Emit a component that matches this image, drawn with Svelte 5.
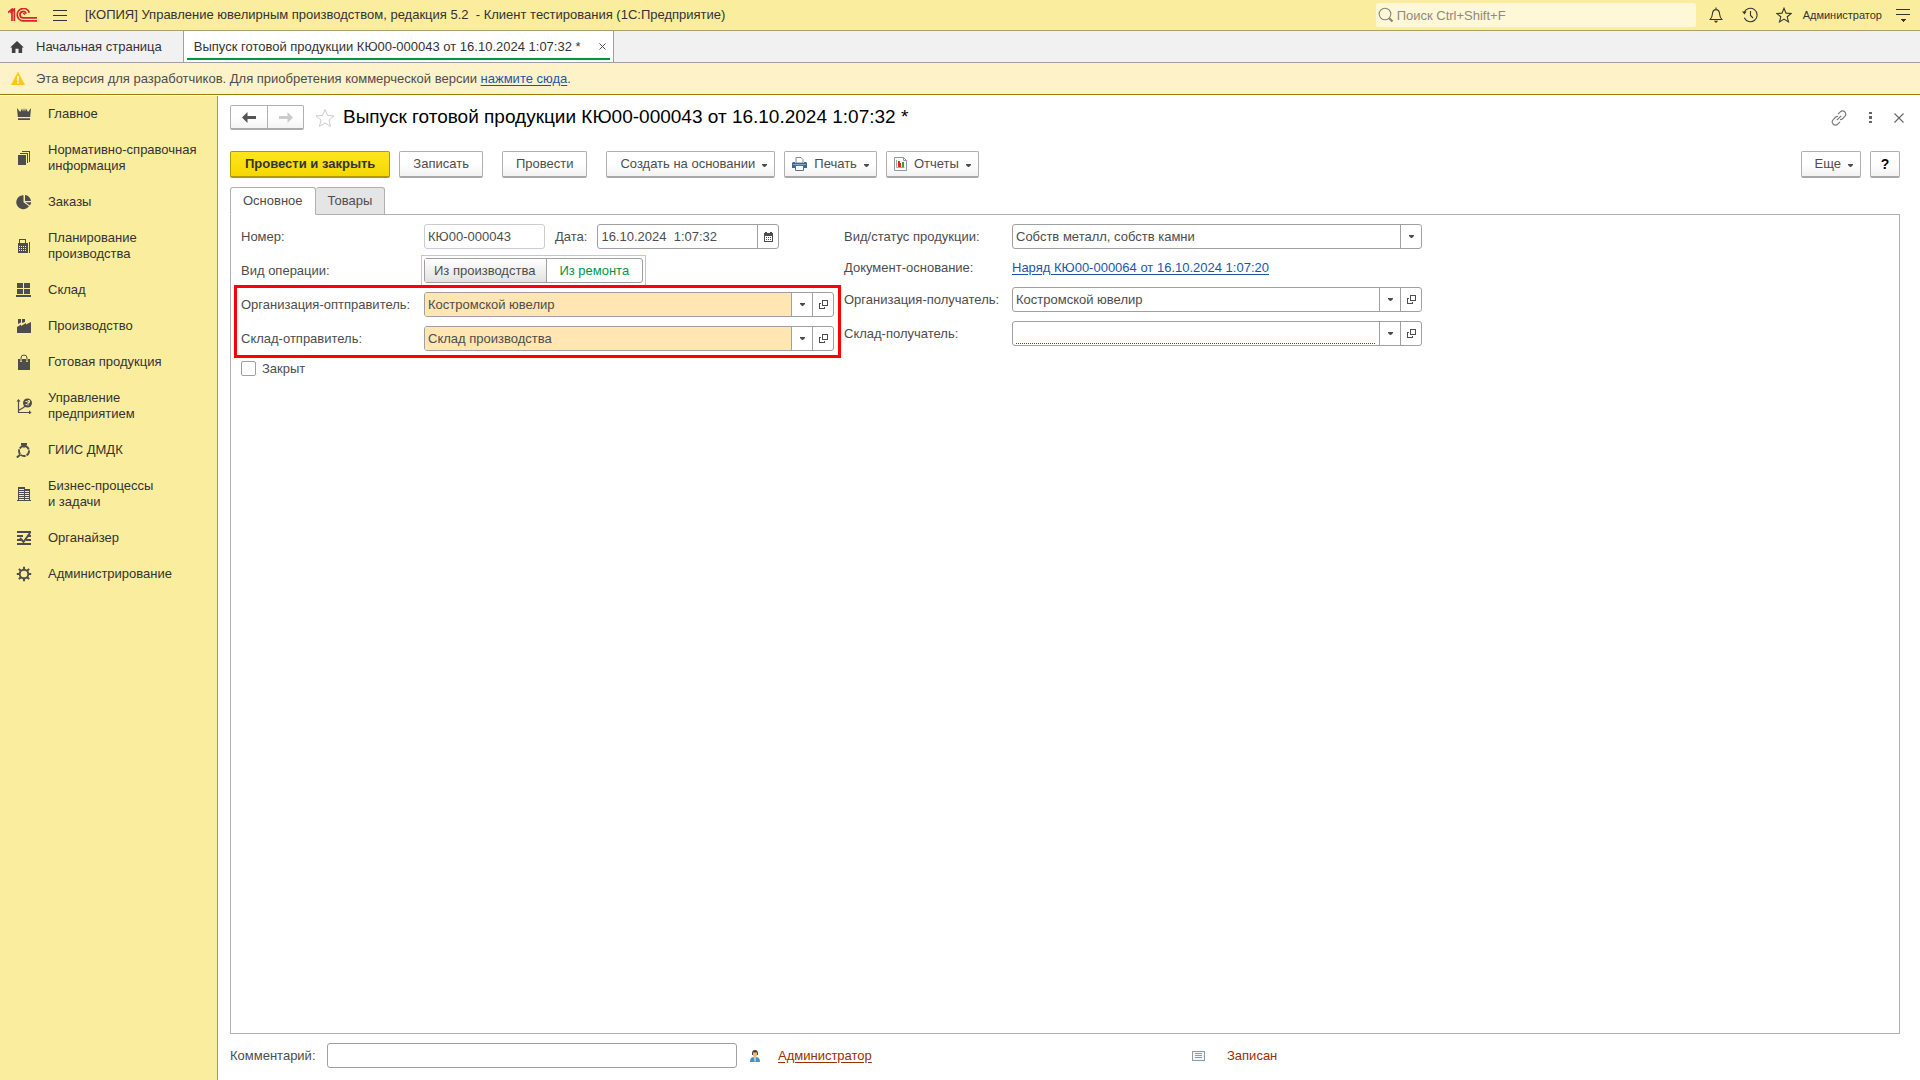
<script lang="ts">
  // Document form: finished goods release, with the application shell around it.
  const sections: { icon: string; lines: string[] }[] = [
    { icon: 'crown', lines: ['Главное'] },
    { icon: 'papers', lines: ['Нормативно-справочная', 'информация'] },
    { icon: 'pie', lines: ['Заказы'] },
    { icon: 'calc', lines: ['Планирование', 'производства'] },
    { icon: 'store', lines: ['Склад'] },
    { icon: 'factory', lines: ['Производство'] },
    { icon: 'bag', lines: ['Готовая продукция'] },
    { icon: 'chart', lines: ['Управление', 'предприятием'] },
    { icon: 'ring', lines: ['ГИИС ДМДК'] },
    { icon: 'building', lines: ['Бизнес-процессы', 'и задачи'] },
    { icon: 'organizer', lines: ['Органайзер'] },
    { icon: 'gear', lines: ['Администрирование'] },
  ];

  const title = 'Выпуск готовой продукции КЮ00-000043 от 16.10.2024 1:07:32 *';

  let operation = $state('production');
  let closed = $state(false);
  let tab = $state('main');
</script>

{#snippet caret()}
  <svg class="caret" viewBox="0 0 5 3" width="5" height="3" aria-hidden="true"><path d="M0 0h5v1L3 3H2L0 1z" /></svg>
{/snippet}

{#snippet pickers(name: string)}
  <button class="pick" aria-label="Выбрать: {name}">{@render caret()}</button>
  <button class="pick" aria-label="Открыть: {name}">
    <svg viewBox="0 0 9 9" width="9" height="9" fill="none" stroke="#4d4d4d" shape-rendering="crispEdges">
      <path d="M3.5 .5h5v5h-5zM2 3.5H.5v5h5V7" />
    </svg>
  </button>
{/snippet}

<div class="app">
  <header class="topbar">
    <svg class="logo" viewBox="0 0 29 14" width="29" height="14" fill="none" stroke="#d8232a" aria-label="1С">
      <path d="M0 4.5L4 1.2V13M2.5 5L6.3 1V13" stroke-width="1.7" />
      <path d="M21.3 4.6A6.2 6.2 0 1 0 15.2 12.9H29" stroke-width="1.8" />
      <path d="M18.2 5.6A3.2 3.2 0 1 0 15.2 9.9H29" stroke-width="1.7" />
      <path d="M15 5.6a1.2 1.2 0 0 1 1.6 1.3" stroke-width="1.3" />
    </svg>
    <button class="icon burger" aria-label="Меню">
      <svg viewBox="0 0 14 11" width="14" height="11" stroke="#333" shape-rendering="crispEdges">
        <path d="M0 .5h14M0 5.5h14M0 10.5h14" />
      </svg>
    </button>
    <span class="app-title">[КОПИЯ] Управление ювелирным производством, редакция 5.2&nbsp; - Клиент тестирования (1С:Предприятие)</span>
    <label class="search">
      <svg viewBox="0 0 16 16" width="16" height="16" fill="none" stroke="#8a8670">
        <circle cx="7" cy="7" r="5.8" stroke-width="1.1" />
        <path d="M11.2 11.2l3.3 3.3" stroke-width="2.2" />
      </svg>
      <input type="search" aria-label="Поиск" placeholder="Поиск Ctrl+Shift+F" />
    </label>
    <nav class="tools">
      <button class="icon" aria-label="Оповещения">
        <svg viewBox="0 0 16 16" width="16" height="16" fill="none" stroke="#333" stroke-width="1.1">
          <path d="M8 .5v2M1.5 12.5h13M2.2 12.3c1.8-1.5 2-3 2.2-5.3C4.6 4.2 6 2.6 8 2.6s3.4 1.6 3.6 4.4c.2 2.3.4 3.8 2.2 5.3" />
          <path d="M5.8 13.8h4.400L8 16z" fill="#333" stroke="none" />
        </svg>
      </button>
      <button class="icon" aria-label="История">
        <svg viewBox="0 0 16 16" width="16" height="16" fill="none" stroke="#333" stroke-width="1.1">
          <path d="M2.2 5.5A6.7 6.7 0 1 1 2.3 10.8M8.5 4v4.5l2.5 2.5" />
          <path d="M0 4.5h4.500L2.5 7.5z" fill="#333" stroke="none" />
        </svg>
      </button>
      <button class="icon" aria-label="Избранное">
        <svg viewBox="0 0 16 16" width="16" height="16" fill="none" stroke="#333" stroke-width="1.1">
          <path d="M8 1.2l2 4.9 5.2.3-4 3.4 1.300 5.100L8 12.100l-4.500 2.800 1.300-5.100-4-3.400 5.200-.3z" />
        </svg>
      </button>
      <button class="user">Администратор</button>
      <button class="icon" aria-label="Сервис и настройки">
        <svg viewBox="0 0 14 14" width="14" height="14" shape-rendering="crispEdges">
          <path d="M0 1h14v1H0zM0 6h14v1H0z" fill="#333" />
          <path d="M4 11h6l-3 3z" fill="#333" />
        </svg>
      </button>
    </nav>
  </header>

  <nav class="windows">
    <button class="window home">
      <svg viewBox="0 0 16 14" width="14" height="12" fill="#404040" aria-hidden="true">
        <path d="M8 0l8 7.5h-2V14H9.800V9H6.200v5H2V7.500H0L8 0z" />
      </svg>
      <span>Начальная страница</span>
    </button>
    <div class="window current">
      <button class="plain">{title}</button>
      <button class="plain close" aria-label="Закрыть окно">
        <svg viewBox="0 0 7 7" width="7" height="7" stroke="#4d4d4d"><path d="M.5 .5l6 6M6.5 .5l-6 6" /></svg>
      </button>
    </div>
  </nav>

  <div class="notice">
    <svg viewBox="0 0 14 13" width="14" height="13" aria-hidden="true">
      <path d="M7 .3L13.700 13H.3z" fill="#fbc814" stroke="#fbc814" stroke-linejoin="round" stroke-width=".6" />
      <path d="M6.200 4h1.600v4.800H6.200zM6.200 9.800h1.600v1.600H6.200z" fill="#fff" />
    </svg>
    <span>Эта версия для разработчиков. Для приобретения коммерческой версии <a href="#buy">нажмите сюда</a>.</span>
  </div>

  <div class="body">
    <nav class="sections">
      {#each sections as s}
        <a class="section" href="#{s.icon}">
          <svg viewBox="0 0 16 16" width="16" height="16" fill="#4d4d4d" aria-hidden="true">
            {#if s.icon === 'crown'}
              <path d="M1 2l3.200 4L6 2.500l1 3L8 2l1 3.500 1-3L12 6l3-4-.8 9H1.800zM2 12.300h12V14H2z" />
            {:else if s.icon === 'papers'}
              <path d="M2 5h8v10H2zM4 3h8v10h-1V4H4zM6 1h8v11h-1V2H6z" shape-rendering="crispEdges" />
            {:else if s.icon === 'pie'}
              <path d="M7.500 1.200v7.100L13 12.200A7 7 0 1 1 7.500 1.200z" />
              <path d="M9 1a6.500 6.500 0 0 1 6 6H9zM9.300 8.300h5.900a7 7 0 0 1-1.300 3.200z" />
            {:else if s.icon === 'calc'}
              <path
                fill-rule="evenodd"
                shape-rendering="crispEdges"
                d="M3 1h7v4h2v10H2V5h1zM4 2v3h5V2zM3 8v1h1V8zm2 0v1h1V8zm2 0v1h1V8zm2 0v1h1V8zM3 10v1h1v-1zm2 0v1h1v-1zm2 0v1h1v-1zm2 0v1h1v-1zM3 12v1h1v-1zm2 0v1h1v-1zm2 0v1h1v-1zm2 0v1h1v-1zM13 4h1v11h-1z"
              />
            {:else if s.icon === 'store'}
              <path d="M1 1h6v5H1zM8 1h6v5H8zM1 7h6v5H1zM8 7h6v5H8zM0 13h15v2H0z" shape-rendering="crispEdges" />
            {:else if s.icon === 'factory'}
              <path d="M1 15V9l4-2.500v1.500l5-3v1.500L15 4v11zM2 1h3v3.500L2 6zM6 1h3v3L6 5z" />
            {:else if s.icon === 'bag'}
              <path d="M2 5h12v11H2z" />
              <path d="M5 8V4.500a3 3 0 0 1 6 0V8" fill="none" stroke="#fbed9e" stroke-width="2" />
              <path d="M5 7.500V4a3 3 0 0 1 6 0v3.500" fill="none" stroke="#4d4d4d" />
            {:else if s.icon === 'chart'}
              <path d="M2.500 2v12.500H14M2.500 12.500l5-3 3-2.500" fill="none" stroke="#4d4d4d" stroke-width="1.200" />
              <path d="M.5 3.500l2-2.500 2 2.500zM13 12.200l2.500 2.300-2.500 2.200z" />
              <circle cx="11.500" cy="5" r="4.500" />
              <path d="M9.500 3.500h1.500M9.500 6.500h1.500M12 2.500v5M12 2.500h1.500v2.200H12" fill="none" stroke="#fbed9e" />
            {:else if s.icon === 'ring'}
              <circle cx="8" cy="9" r="5" fill="none" stroke="#4d4d4d" stroke-width="1.900" stroke-dasharray="5 1" />
              <path d="M5 1h6v2L8 6 5 3z" />
              <path d="M4.500 12.500L.8 15.500" stroke="#4d4d4d" stroke-width="2" />
            {:else if s.icon === 'building'}
              <path
                fill-rule="evenodd"
                shape-rendering="crispEdges"
                d="M2 1h7v2h5v11h1v1H1v-1h1zM3 3v1h5V3zm0 2v1h5V5zm0 2v1h5V7zm0 2v1h5V9zm0 2v1h5v-1zm0 2v1h5v-1zm6-8v1h4V5zm0 2v1h4V7zm0 2v1h4V9zm0 2v1h4v-1zm0 2v1h4v-1z"
              />
            {:else if s.icon === 'organizer'}
              <path d="M1 2h14M1 6h6M11 6h4M1 10h4M10 10h5M1 14h14" stroke="#4d4d4d" stroke-width="2" />
              <path d="M4 8l3.500 4L14 3" fill="none" stroke="#4d4d4d" stroke-width="2" />
            {:else}
              <circle cx="8" cy="8" r="4.300" fill="none" stroke="#4d4d4d" stroke-width="1.900" />
              <path
                d="M8 .8v3M8 12.200v3M.8 8h3M12.200 8h3M2.900 2.900L5 5M11 11l2.100 2.100M13.100 2.900L11 5M5 11l-2.100 2.100"
                stroke="#4d4d4d"
                stroke-width="2"
              />
            {/if}
          </svg>
          <span>
            {#each s.lines as line}<span class="line">{line}</span>{/each}
          </span>
        </a>
      {/each}
    </nav>

    <main class="document">
      <div class="heading">
        <div class="history">
          <button aria-label="Назад">
            <svg viewBox="0 0 14 11" width="14" height="11"><path d="M0 5.500L5.500 0v4H14v3H5.500v4z" fill="#555" /></svg>
          </button>
          <button aria-label="Вперед" disabled>
            <svg viewBox="0 0 14 11" width="14" height="11"><path d="M14 5.500L8.500 0v4H0v3h8.500v4z" fill="#ccc" /></svg>
          </button>
        </div>
        <button class="plain fav" aria-label="В избранное">
          <svg viewBox="0 0 20 20" width="20" height="20" fill="none" stroke="#ccc">
            <path d="M10 1.500l2.500 6 6.500.4-5 4.200 1.600 6.400L10 15l-5.600 3.500L6 12.100 1 7.900l6.500-.4z" />
          </svg>
        </button>
        <h1>{title}</h1>
        <div class="form-tools">
          <button class="plain" aria-label="Ссылка">
            <svg viewBox="0 0 16 16" width="16" height="16" fill="none" stroke="#777" stroke-width="1.200">
              <path d="M7 4.200l2.300-2.300a3 3 0 0 1 4.500 0 3 3 0 0 1 0 4.500L11.500 8.700a3 3 0 0 1-2.500.8M9 11.800l-2.300 2.300a3 3 0 0 1-4.500 0 3 3 0 0 1 0-4.500l2.300-2.300A3 3 0 0 1 7 6.500M5.800 10.200l4.400-4.400" />
            </svg>
          </button>
          <button class="plain" aria-label="Еще">
            <svg viewBox="0 0 3 11" width="3" height="11" fill="#666" shape-rendering="crispEdges">
              <path d="M0 0h3v2H0zM0 4h3v3H0zM0 9h3v2H0z" />
            </svg>
          </button>
          <button class="plain" aria-label="Закрыть">
            <svg viewBox="0 0 10 10" width="10" height="10" stroke="#666" stroke-width="1.100"><path d="M.5 .5l9 9M9.500 .5l-9 9" /></svg>
          </button>
        </div>
      </div>

      <div class="commands">
        <button class="cmd primary">Провести и закрыть</button>
        <button class="cmd">Записать</button>
        <button class="cmd apart">Провести</button>
        <button class="cmd apart menu">Создать на основании {@render caret()}</button>
        <button class="cmd with-icon">
          <svg viewBox="0 0 15 14" width="15" height="14" aria-hidden="true">
            <path d="M4 .5h5L11 2.500V6H4z" fill="#fff" stroke="#7d8b99" />
            <path d="M1 5h2v1h9V5h2l1 1v5H0V6z" fill="#3d6690" />
            <path d="M1 7h13v1H1z" fill="#7fa3c6" />
            <path d="M3.500 8.500h8v5h-8z" fill="#fff" stroke="#5d7389" />
          </svg>
          Печать {@render caret()}
        </button>
        <button class="cmd with-icon">
          <svg viewBox="0 0 13 14" width="13" height="14" aria-hidden="true">
            <path d="M.5 .5h9l3 3v10H.5z" fill="#fff" stroke="#8b99a8" />
            <path d="M9.500 .5v3h3" fill="none" stroke="#8b99a8" />
            <path d="M2.500 3v7.500h8" fill="none" stroke="#9aa" />
            <path d="M4 4h2v6H4z" fill="#e8281e" /><path d="M6 6h1v4H6z" fill="#e8281e" /><path d="M8 5h2v5H8z" fill="#31a037" />
          </svg>
          Отчеты {@render caret()}
        </button>
        <button class="cmd menu more">Еще {@render caret()}</button>
        <button class="cmd help" aria-label="Справка">?</button>
      </div>

      <div class="tabs" role="tablist">
        <button role="tab" aria-selected={tab === 'main'} onclick={() => (tab = 'main')}>Основное</button>
        <button role="tab" aria-selected={tab === 'goods'} onclick={() => (tab = 'goods')}>Товары</button>
      </div>

      <section class="panel">
        <div class="column left">
          <div class="row">
            <label class="caption" for="number">Номер:</label>
            <div class="field number"><input id="number" value="КЮ00-000043" /></div>
            <label class="date-caption" for="date">Дата:</label>
            <div class="field date">
              <input id="date" value="16.10.2024  1:07:32" />
              <button class="pick" aria-label="Календарь">
                <svg viewBox="0 0 9 10" width="9" height="10" fill="#4d4d4d" shape-rendering="crispEdges">
                  <path fill-rule="evenodd" d="M0 1h1V0h2v1h3V0h2v1h1v9H0zM1 4v5h7V4z" />
                  <path d="M2 5h1v1H2zM4 5h1v1H4zM6 5h1v1H6zM2 7h1v1H2zM4 7h1v1H4zM6 7h1v1H6z" />
                </svg>
              </button>
            </div>
          </div>
          <div class="row" role="radiogroup" aria-label="Вид операции">
            <span class="caption">Вид операции:</span>
            <div class="switch">
              <label class:chosen={operation === 'production'}>
                <input type="radio" name="operation" value="production" bind:group={operation} />Из производства
              </label>
              <label class:chosen={operation === 'repair'}>
                <input type="radio" name="operation" value="repair" bind:group={operation} />Из ремонта
              </label>
            </div>
          </div>
          <div class="sender">
            <div class="row">
              <label class="caption" for="org-from">Организация-оптправитель:</label>
              <div class="field filled">
                <input id="org-from" value="Костромской ювелир" />
                {@render pickers('организация-отправитель')}
              </div>
            </div>
            <div class="row">
              <label class="caption" for="store-from">Склад-отправитель:</label>
              <div class="field filled">
                <input id="store-from" value="Склад производства" />
                {@render pickers('склад-отправитель')}
              </div>
            </div>
          </div>
          <label class="check"><input type="checkbox" bind:checked={closed} />Закрыт</label>
        </div>

        <div class="column right">
          <div class="row">
            <label class="caption" for="status">Вид/статус продукции:</label>
            <div class="field">
              <select id="status"><option>Собств металл, собств камни</option></select>
              <span class="pick">{@render caret()}</span>
            </div>
          </div>
          <div class="row basis">
            <span class="caption">Документ-основание:</span>
            <a href="#order">Наряд КЮ00-000064 от 16.10.2024 1:07:20</a>
          </div>
          <div class="row">
            <label class="caption" for="org-to">Организация-получатель:</label>
            <div class="field">
              <input id="org-to" value="Костромской ювелир" />
              {@render pickers('организация-получатель')}
            </div>
          </div>
          <div class="row">
            <label class="caption" for="store-to">Склад-получатель:</label>
            <div class="field">
              <div class="required"><input id="store-to" /></div>
              {@render pickers('склад-получатель')}
            </div>
          </div>
        </div>
      </section>

      <footer class="footer">
        <div class="comment">
          <label for="comment">Комментарий:</label>
          <div class="field"><input id="comment" /></div>
          <svg viewBox="0 0 10 12" width="10" height="12" aria-hidden="true">
            <path d="M2 3.500C2 1 3.200 0 5 0s3 1 3 3.500V5H2z" fill="#4a4038" />
            <path d="M3 2.500h4v3L5.500 8h-1L3 5.500z" fill="#f3b96b" />
            <path d="M0 12c0-3 1-4.500 3.500-5L5 9l1.500-2C9 7.500 10 9 10 12z" fill="#3d94c9" />
            <path d="M4.500 8.500h1v3h-1z" fill="#fff" />
          </svg>
          <a class="author" href="#author">Администратор</a>
        </div>
        <div class="state">
          <svg viewBox="0 0 13 10" width="13" height="10" shape-rendering="crispEdges" aria-hidden="true">
            <path d="M.5 .5h12v9H.5z" fill="#f4f7fa" stroke="#8b9bb0" />
            <path d="M3 2h7v1H3zM3 4h7v1H3zM3 6h7v1H3z" fill="#8b9bb0" />
          </svg>
          <span>Записан</span>
        </div>
      </footer>
    </main>
  </div>
</div>

<style>
  :global(body) {
    background: #fff;
  }
  .app {
    display: flex;
    flex-direction: column;
    min-height: 100vh;
    color: #4d4d4d;
    font: 13px/16px 'Liberation Sans', Arial, sans-serif;
  }
  .app *,
  .app {
    box-sizing: border-box;
  }
  button,
  input,
  select {
    margin: 0;
    padding: 0;
    border: 0;
    outline: 0;
    background: none;
    color: inherit;
    font: inherit;
  }
  svg {
    display: block;
    flex-shrink: 0;
  }
  a {
    color: #1c55ae;
    text-underline-offset: 2px;
  }
  .caret {
    fill: #4d4d4d;
  }

  .topbar {
    display: flex;
    align-items: center;
    height: 31px;
    padding: 0 10px 0 8px;
    border-bottom: 1px solid #aaa06a;
    background: #fbed9e;
    color: #333;
  }
  .icon {
    display: flex;
  }
  .burger {
    margin: 0 18px 0 16px;
  }
  .app-title {
    flex: 1;
    white-space: nowrap;
  }
  .search {
    display: flex;
    align-items: center;
    gap: 3px;
    width: 320px;
    height: 24px;
    margin-right: 12px;
    padding-left: 2px;
    border-radius: 2px;
    background: #fef7d8;
  }
  .search input {
    flex: 1;
    height: 24px;
  }
  .search input::placeholder {
    color: #8f8b78;
    opacity: 1;
  }
  .tools {
    display: flex;
    align-items: center;
    gap: 18px;
  }
  .user {
    margin: 0 -4px 0 -7px;
    font-size: 11px;
  }

  .windows {
    display: flex;
    height: 32px;
    border-bottom: 1px solid #a0a0a0;
    background: #f1f1f1;
    color: #333;
  }
  .window {
    display: flex;
    align-items: center;
    border-right: 1px solid #a0a0a0;
  }
  .home {
    gap: 12px;
    padding: 0 21px 0 10px;
  }
  .current {
    position: relative;
    gap: 18px;
    padding: 0 7px 0 10px;
    background: #fff;
  }
  .current::after {
    content: '';
    position: absolute;
    right: 3px;
    bottom: 2px;
    left: 3px;
    height: 2px;
    background: #009646;
  }
  .plain {
    display: flex;
    white-space: nowrap;
  }

  .notice {
    display: flex;
    align-items: center;
    gap: 11px;
    height: 32px;
    padding-left: 11px;
    border-bottom: 1px solid #a08000;
    background: #fef2c8;
  }

  .body {
    display: flex;
    flex: 1;
    padding-top: 1px;
  }
  .sections {
    flex: 0 0 218px;
    border-right: 1px solid #a09868;
    background: #fbed9e;
  }
  .section {
    display: flex;
    align-items: center;
    gap: 16px;
    padding: 10px 16px;
    color: #333;
    text-decoration: none;
    white-space: nowrap;
  }
  .line {
    display: block;
  }

  .document {
    display: flex;
    flex: 1;
    flex-direction: column;
    min-width: 0;
    padding: 9px 20px 12px 12px;
  }
  .heading {
    display: flex;
    align-items: center;
    height: 25px;
  }
  .history {
    display: flex;
    height: 25px;
    border: 1px solid #b0b0b0;
    border-bottom: 2px solid #aaa;
    border-radius: 2px;
    background: linear-gradient(#fff 50%, #f4f4f4);
  }
  .history button {
    display: flex;
    align-items: center;
    justify-content: center;
    width: 36px;
  }
  .history button + button {
    border-left: 1px solid #b0b0b0;
  }
  .fav {
    margin: 0 8px 0 11px;
  }
  h1 {
    flex: 1;
    margin: 0 0 2px;
    color: #000;
    font-size: 19px;
    font-weight: 400;
    line-height: 22px;
    white-space: nowrap;
  }
  .form-tools {
    display: flex;
    align-items: center;
    gap: 22px;
    margin-right: -4px;
  }

  .commands {
    display: flex;
    gap: 9px;
    margin-top: 21px;
  }
  .cmd {
    display: flex;
    align-items: center;
    justify-content: center;
    gap: 7px;
    height: 27px;
    padding: 0 13px;
    border: 1px solid #b0b0b0;
    border-bottom: 2px solid #a8a8a8;
    border-radius: 2px;
    background: linear-gradient(#fff 50%, #f2f2f2);
    white-space: nowrap;
  }
  .cmd .caret {
    margin-top: 3px;
  }
  .menu {
    padding: 0 7px 0 13px;
  }
  .with-icon {
    padding: 0 7px;
  }
  .primary {
    padding: 0 14px;
    border-color: #b09a00;
    background: linear-gradient(#ffe51f, #f5d800);
    color: #333;
    font-weight: 700;
  }
  .apart {
    margin-left: 10px;
  }
  .more {
    margin-left: auto;
  }
  .help {
    width: 30px;
    color: #000;
    font-size: 14px;
    font-weight: 700;
  }

  .tabs {
    display: flex;
    z-index: 1;
    margin: 9px 0 -1px;
  }
  .tabs button {
    height: 28px;
    padding: 0 12px;
    border: 1px solid #b0b0b0;
    border-radius: 3px 3px 0 0;
    background: #e5e5e5;
  }
  .tabs button + button {
    border-left: 0;
  }
  .tabs button[aria-selected='true'] {
    border-bottom-color: #fff;
    background: #fff;
  }

  .panel {
    display: flex;
    flex: 1;
    align-items: flex-start;
    gap: 10px;
    padding: 9px 10px;
    border: 1px solid #b0b0b0;
  }
  .column {
    display: flex;
    flex-direction: column;
    gap: 9px;
  }
  .left {
    width: 593px;
  }
  .right {
    width: 578px;
  }
  .row {
    display: flex;
    align-items: center;
    height: 25px;
  }
  .basis {
    height: 20px;
  }
  .caption {
    flex: 0 0 183px;
    white-space: nowrap;
  }
  .right .caption {
    flex-basis: 168px;
  }
  .field {
    display: flex;
    flex: 1;
    min-width: 0;
    height: 25px;
    border: 1px solid #a0a0a0;
    border-radius: 3px;
    background: #fff;
  }
  .field input,
  .field select {
    flex: 1;
    min-width: 0;
    height: 23px;
    padding: 0 3px;
    appearance: none;
    white-space: pre;
  }
  .filled input {
    border-radius: 2px 0 0 2px;
    background: #ffe6b3;
  }
  .pick {
    display: flex;
    flex-shrink: 0;
    align-items: center;
    justify-content: center;
    width: 21px;
    border-left: 1px solid #a0a0a0;
  }
  .number {
    flex: 0 0 121px;
    border-color: #ccc;
  }
  .date-caption {
    margin: 0 10px;
  }
  .date {
    flex: 0 0 182px;
  }
  .required {
    display: flex;
    flex: 1;
  }
  .field .required input {
    height: 22px;
    margin: 0 4px 0 3px;
    border-bottom: 1px dotted #f00;
  }

  .switch {
    display: flex;
    position: relative;
    height: 25px;
    border: 1px solid #a0a0a0;
    border-radius: 3px;
  }
  .switch::before {
    content: '';
    position: absolute;
    inset: -4px;
    border: 1px solid #f5c93a;
    pointer-events: none;
  }
  .switch label {
    display: flex;
    align-items: center;
    padding: 0 11px 0 9px;
    color: #009646;
    white-space: nowrap;
  }
  .switch label + label {
    padding: 0 13px 0 12px;
    border-left: 1px solid #a0a0a0;
  }
  .switch .chosen {
    background: linear-gradient(#fff, #e2e2e2);
    color: #4d4d4d;
  }
  .switch input {
    position: absolute;
    opacity: 0;
    pointer-events: none;
  }

  .sender {
    display: flex;
    position: relative;
    flex-direction: column;
    gap: 9px;
  }
  .sender::after {
    content: '';
    position: absolute;
    inset: -7px;
    border: 3px solid #f00;
    pointer-events: none;
  }
  .check {
    display: flex;
    align-items: center;
    gap: 6px;
    height: 17px;
  }
  .check input {
    width: 15px;
    height: 15px;
    border: 1px solid #a0a0a0;
    border-radius: 2px;
    appearance: none;
  }
  .check input:checked {
    background: #009646;
  }

  .footer {
    display: flex;
    align-items: center;
    margin-top: 9px;
  }
  .comment {
    display: flex;
    flex: 0 0 962px;
    align-items: center;
  }
  .comment label {
    flex: 0 0 97px;
  }
  .comment .field {
    flex: 0 0 410px;
    margin-right: 13px;
  }
  .author {
    margin-left: 18px;
  }
  .author,
  .state {
    color: #963200;
  }
  .state {
    display: flex;
    align-items: center;
    gap: 22px;
  }
</style>
